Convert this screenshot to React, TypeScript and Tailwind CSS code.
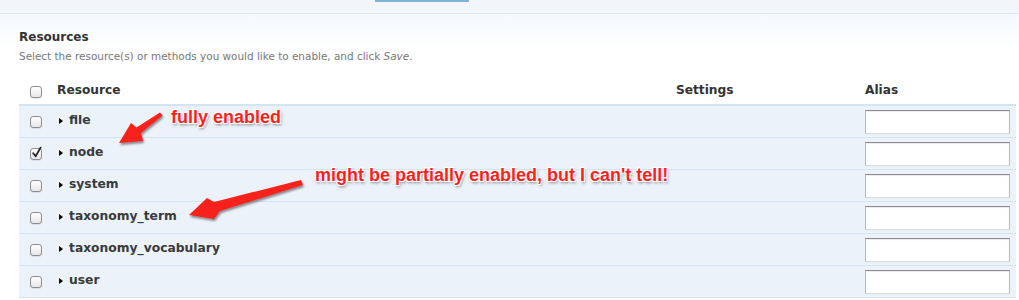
import React from "react";

const rows = [
  { name: "file", checked: false },
  { name: "node", checked: true },
  { name: "system", checked: false },
  { name: "taxonomy_term", checked: false },
  { name: "taxonomy_vocabulary", checked: false },
  { name: "user", checked: false },
];

function Checkbox({ checked }: { checked?: boolean }) {
  return (
    <div className="relative w-[12px] h-[12px] rounded-[3px] border border-[#8d8d8d] bg-[linear-gradient(#ffffff,#e6e6e6)] shadow-[0_1px_0_rgba(0,0,0,0.08)]">
      {checked && (
        <svg className="absolute left-[0px] top-[-3px]" width="12" height="13" viewBox="0 0 12 13">
          <path d="M2.2 7.2 L4.6 10.2 L9.6 1.6" fill="none" stroke="#222" strokeWidth="1.8" strokeLinecap="round" strokeLinejoin="round" />
        </svg>
      )}
    </div>
  );
}

export default function App() {
  return (
    <div className="relative w-[1019px] h-[300px] overflow-hidden bg-white font-['DejaVu_Sans',sans-serif]">
      <div className="relative h-[14px] bg-[#f2f6fa] border-b border-[#e0e8ef]">
        <div className="absolute left-[375px] top-0 w-[94px] h-[2px] bg-[#7fb4d8]" />
      </div>
      <div className="bg-[linear-gradient(#f4f8fc,#ffffff_34px)] pt-[16px] px-[19px]">
        <div className="text-[12px] leading-[15px] font-bold text-[#333]">Resources</div>
        <div className="mt-[4px] text-[10.45px] leading-[14px] text-[#777]">
          Select the resource(s) or methods you would like to enable, and click <em>Save</em>.
        </div>
        <div className="mt-[18px] w-[997px]">
          <div className="grid grid-cols-[31px_619px_189px_158px] h-[25px] pb-[4px] items-center border-b-2 border-[#d3e5f3] text-[12.2px] font-bold text-[#333]">
            <div className="pl-[11px] pt-[2px]"><Checkbox /></div>
            <div className="pl-[7px]">Resource</div>
            <div className="pl-[7px]">Settings</div>
            <div className="pl-[7px]">Alias</div>
          </div>
          {rows.map((r) => (
            <div
              key={r.name}
              className="grid grid-cols-[31px_619px_189px_158px] h-[32px] items-center bg-[#ebf2f9] border-b border-[#d4e4f1] text-[12.3px] font-bold text-[#3a3a3a]"
            >
              <div className="pl-[11px]"><Checkbox checked={r.checked} /></div>
              <div className="pl-[9px] flex items-center relative top-[-1px]">
                <span className="w-0 h-0 border-y-[3.5px] border-y-transparent border-l-[4px] border-l-black" />
                <span className="ml-[6px]">{r.name}</span>
              </div>
              <div />
              <div className="pl-[7px]">
                <div className="w-[145px] h-[24px] bg-white border border-[#b9b9b9] border-t-[#8a8a8a] border-b-[#dadada] shadow-[inset_0_1px_1px_rgba(0,0,0,0.08)]" />
              </div>
            </div>
          ))}
        </div>
      </div>

      <svg className="absolute left-0 top-0 pointer-events-none" width="1019" height="300" viewBox="0 0 1019 300">
        <defs>
          <filter id="sh" x="-20%" y="-20%" width="140%" height="160%">
            <feDropShadow dx="1" dy="2" stdDeviation="1.3" floodColor="#000" floodOpacity="0.45" />
          </filter>
        </defs>
        <polygon
          points="160,112.5 162.5,115.5 141,133 143,141 119,143 131,123 136.5,127.5"
          fill="#f7221c"
          filter="url(#sh)"
        />
        <polygon
          points="301,180 303,185 220,211 214,219 189,215 207,198 214,202"
          fill="#f7221c"
          filter="url(#sh)"
        />
      </svg>

      <div className="absolute left-[171px] top-[108px] text-[18px] leading-[18px] font-bold font-['Liberation_Sans',sans-serif] text-[#ff1f1f] whitespace-nowrap [text-shadow:0_0_1px_#fff,1px_0_0_#fff,-1px_0_0_#fff,0_1px_0_#fff,0_-1px_0_#fff,1px_1px_0_#fff,-1px_-1px_0_#fff,1px_-1px_0_#fff,-1px_1px_0_#fff,1px_2px_3px_rgba(0,0,0,0.5)]">
        fully enabled
      </div>
      <div className="absolute left-[315px] top-[166px] text-[18px] leading-[18px] font-bold font-['Liberation_Sans',sans-serif] text-[#ff1f1f] whitespace-nowrap [text-shadow:0_0_1px_#fff,1px_0_0_#fff,-1px_0_0_#fff,0_1px_0_#fff,0_-1px_0_#fff,1px_1px_0_#fff,-1px_-1px_0_#fff,1px_-1px_0_#fff,-1px_1px_0_#fff,1px_2px_3px_rgba(0,0,0,0.5)]">
        might be partially enabled, but I can't tell!
      </div>
    </div>
  );
}
